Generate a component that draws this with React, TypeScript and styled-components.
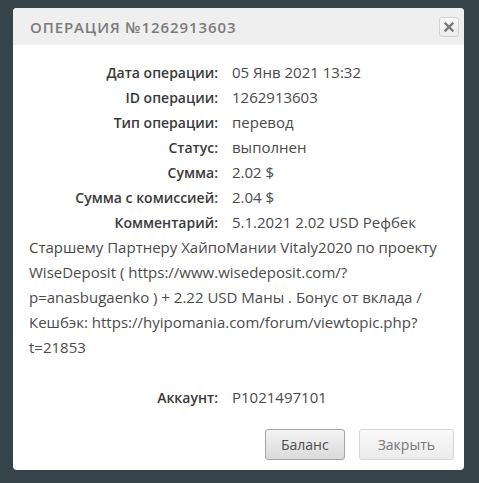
import React from 'react';
import styled, { createGlobalStyle } from 'styled-components';

const GlobalStyle = createGlobalStyle`
  html, body {
    margin: 0;
    padding: 0;
    background: #37434b;
  }
  body {
    font-family: 'Open Sans', Lato, sans-serif;
  }
`;

interface Row {
  label: string;
  value: string;
}

const rows: Row[] = [
  { label: 'Дата операции:', value: '05 Янв 2021 13:32' },
  { label: 'ID операции:', value: '1262913603' },
  { label: 'Тип операции:', value: 'перевод' },
  { label: 'Статус:', value: 'выполнен' },
  { label: 'Сумма:', value: '2.02 $' },
  { label: 'Сумма с комиссией:', value: '2.04 $' },
];

const comment =
  '5.1.2021 2.02 USD Рефбек Старшему Партнеру ХайпоМании Vitaly2020 по проекту WiseDeposit ( https://www.wisedeposit.com/?\u200bp=anasbugaenko ) + 2.22 USD Маны . Бонус от вклада / Кешбэк: https://hyipomania.com/forum/viewtopic.php?\u200bt=21853';

const App: React.FC = () => {
  return (
    <>
      <GlobalStyle />
      <Page>
        <Dialog>
          <Header>
            <Title>Операция №1262913603</Title>
            <CloseButton aria-label="close">
              <svg width="10" height="10" viewBox="0 0 10 10">
                <path d="M1.5 1.5 L8.5 8.5 M8.5 1.5 L1.5 8.5" stroke="#7a7a7a" strokeWidth="2.4" strokeLinecap="square" />
              </svg>
            </CloseButton>
          </Header>
          <Body>
            {rows.map((r) => (
              <InfoRow key={r.label}>
                <Label>{r.label}</Label>
                <Value>{r.value}</Value>
              </InfoRow>
            ))}
            <InfoRow>
              <Label>Комментарий:</Label>
              <Value>{comment}</Value>
            </InfoRow>
            <InfoRow $spaced>
              <Label>Аккаунт:</Label>
              <Value>P1021497101</Value>
            </InfoRow>
          </Body>
          <Footer>
            <Button $primary>Баланс</Button>
            <Button>Закрыть</Button>
          </Footer>
        </Dialog>
      </Page>
    </>
  );
};

const Page = styled.div`
  width: 479px;
  height: 483px;
  padding: 8px 0 0 13px;
  box-sizing: border-box;
`;

const Dialog = styled.div`
  width: 451px;
  height: 462px;
  background: #fff;
  border-radius: 4px;
  display: flex;
  flex-direction: column;
  overflow: hidden;
`;

const Header = styled.div`
  height: 37px;
  background: #efefef;
  display: flex;
  align-items: center;
  justify-content: space-between;
  padding: 0 5px 0 17px;
  flex-shrink: 0;
`;

const Title = styled.div`
  text-transform: uppercase;
  font-size: 15px;
  font-weight: 600;
  letter-spacing: 0.9px;
  color: #7b7b7b;
`;

const CloseButton = styled.button`
  width: 20px;
  height: 20px;
  margin-top: 1px;
  padding: 0;
  border: 1px solid #d2d2d2;
  border-radius: 3px;
  background: linear-gradient(#fafafa, #ececec);
  display: flex;
  align-items: center;
  justify-content: center;
`;

const Body = styled.div`
  flex: 1;
  padding: 15px 14px 0 16px;
  font-size: 15px;
  line-height: 25px;
  color: #444;
`;

const InfoRow = styled.div<{ $spaced?: boolean }>`
  margin-top: ${(p) => (p.$spaced ? '25px' : '0')};
`;

const Label = styled.span`
  display: inline-block;
  width: 203px;
  padding-right: 14px;
  box-sizing: border-box;
  text-align: right;
  font-size: 14px;
  font-weight: 600;
  color: #3a3a3a;
`;

const Value = styled.span`
  color: #4a4a4a;
`;

const Footer = styled.div`
  display: flex;
  justify-content: flex-end;
  gap: 14px;
  padding: 0 10px 10px 0;
`;

const Button = styled.button<{ $primary?: boolean }>`
  height: 31px;
  padding: 0 ${(p) => (p.$primary ? '15px' : '18px')};
  border-radius: 3px;
  border: 1px solid ${(p) => (p.$primary ? '#a3a3a3' : '#d6d6d6')};
  background: ${(p) =>
    p.$primary ? 'linear-gradient(#f4f4f4, #dadada)' : 'linear-gradient(#fafafa, #ebebeb)'};
  color: ${(p) => (p.$primary ? '#4e4e4e' : '#777')};
  font-family: 'Open Sans', sans-serif;
  font-size: 14px;
`;

export default App;
